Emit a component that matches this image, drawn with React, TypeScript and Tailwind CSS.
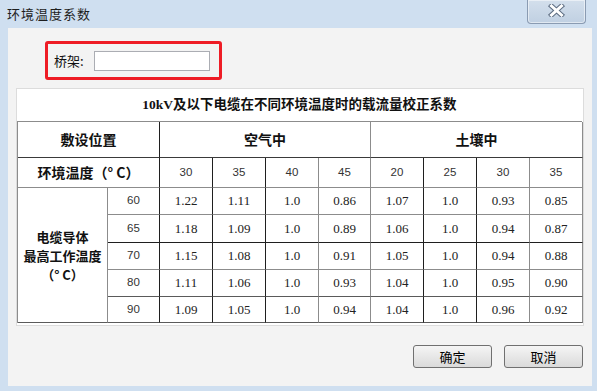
import React from "react";

const cjk = "font-['Noto_Sans_CJK_SC',sans-serif]";
const serif = "font-['Liberation_Serif','Noto_Sans_CJK_SC',serif]";

// line colour of each vertical boundary (right edge of column i)
const colR = [
    "border-r-[#8c8c8c]",
    "border-r-[#1f1f1f]",
    "border-r-[#1f1f1f]",
    "border-r-[#1f1f1f]",
    "border-r-[#8c8c8c]",
    "border-r-[#8c8c8c]",
    "border-r-[#1f1f1f]",
    "border-r-[#1f1f1f]",
    "border-r-[#8c8c8c]",
    "border-r-[#8c8c8c]",
];

// line colour of each horizontal boundary (bottom edge of row i)
const rowB = [
    "border-b-[#3a3a3a]",
    "border-b-[#8c8c8c]",
    "border-b-[#8c8c8c]",
    "border-b-[#1f1f1f]",
    "border-b-[#8c8c8c]",
    "border-b-[#5a5a5a]",
    "border-b-[#5a5a5a]",
];

const airTemps = ["30", "35", "40", "45"];
const soilTemps = ["20", "25", "30", "35"];

const rows: { t: string; v: string[] }[] = [
    { t: "60", v: ["1.22", "1.11", "1.0", "0.86", "1.07", "1.0", "0.93", "0.85"] },
    { t: "65", v: ["1.18", "1.09", "1.0", "0.89", "1.06", "1.0", "0.94", "0.87"] },
    { t: "70", v: ["1.15", "1.08", "1.0", "0.91", "1.05", "1.0", "0.94", "0.88"] },
    { t: "80", v: ["1.11", "1.06", "1.0", "0.93", "1.04", "1.0", "0.95", "0.90"] },
    { t: "90", v: ["1.09", "1.05", "1.0", "0.94", "1.04", "1.0", "0.96", "0.92"] },
];

function Cell({ c, r, className = "", children }: { c: number; r: number; className?: string; children?: React.ReactNode }) {
    return (
        <div className={`flex items-center justify-center border-r border-b ${colR[c]} ${rowB[r]} ${className}`}>
            {children}
        </div>
    );
}

function CloseX() {
    return (
        <svg width="17" height="13" viewBox="0 0 17 13">
            <path d="M3.5 2 L13.5 11 M13.5 2 L3.5 11" stroke="#5d6d82" strokeWidth="5" strokeLinecap="square" />
            <path d="M3.5 2 L13.5 11 M13.5 2 L3.5 11" stroke="#ffffff" strokeWidth="3" strokeLinecap="square" />
        </svg>
    );
}

function DialogButton({ label }: { label: string }) {
    return (
        <button className={`w-[79px] h-[23px] rounded-[3px] border border-[#707070] bg-gradient-to-b from-[#f5f5f5] to-[#dadada] text-[13px] text-black leading-none ${cjk}`}>
            {label}
        </button>
    );
}

export default function App() {
    return (
        <div className="w-[597px] h-[391px] overflow-hidden bg-[#cfdff0] flex flex-col">
            {/* Title bar */}
            <div className="h-[28px] flex items-start shrink-0">
                <span className={`pl-[7px] pt-[5px] leading-[18px] text-[13px] tracking-[1px] text-[#1e1e1e] ${cjk}`}>环境温度系数</span>
                <div className="ml-auto mr-[11px] w-[59px] h-[24px] rounded-b-[4px] border border-t-0 border-[#8a9bb2] bg-gradient-to-b from-[#d3dfec] to-[#c0d0e2] flex items-center justify-center pb-[3px] shadow-[inset_0_0_0_1px_rgba(255,255,255,0.5)]">
                    <CloseX />
                </div>
            </div>

            {/* Content */}
            <div className="flex-1 ml-[8px] mr-[5px] mb-[5px] bg-[#f3f3f3] flex flex-col px-2">
                <div className="self-start ml-[29px] mt-[13px] w-[177px] h-[39px] border-[3px] border-[#ee1c25] rounded-[3px] flex items-center pl-[6px]">
                    <span className={`text-[13px] text-[#111] ${cjk}`}>桥架:</span>
                    <div className="ml-[10px] w-[116px] h-[20px] bg-white border border-[#abadb3]" />
                </div>

                {/* Table panel */}
                <div className="mt-[8px] bg-white border border-[#dcdcdc] pr-px pb-[2px]">
                    <div className={`h-[32px] flex items-center justify-center text-[13.5px] font-bold text-[#111] ${serif}`}>
                        10kV及以下电缆在不同环境温度时的载流量校正系数
                    </div>
                    <div className="grid grid-cols-[90px_52px_53px_53px_53px_52px_53px_53px_53px_53px] grid-rows-[36px_30px_27px_28px_27px_27px_26px] border-l border-t border-l-[#8c8c8c] border-t-[#8c8c8c]">
                        <Cell c={1} r={0} className={`col-span-2 text-[14px] font-bold text-[#111] ${cjk}`}>敷设位置</Cell>
                        <Cell c={5} r={0} className={`col-span-4 text-[14px] font-bold text-[#111] ${cjk}`}>空气中</Cell>
                        <Cell c={9} r={0} className={`col-span-4 text-[14px] font-bold text-[#111] ${cjk}`}>土壤中</Cell>

                        <Cell c={1} r={1} className={`col-span-2 text-[14px] font-bold text-[#111] ${cjk}`}>环境温度（° C）</Cell>
                        {[...airTemps, ...soilTemps].map((t, i) => (
                            <Cell key={i} c={i + 2} r={1} className="text-[11.5px] text-[#333] font-['Liberation_Sans',sans-serif]">{t}</Cell>
                        ))}

                        <Cell c={0} r={6} className={`row-span-5 flex-col text-[13px] font-bold text-[#111] ${cjk}`}>
                            <span className="block h-[19px] leading-[19px]">电缆导体</span>
                            <span className="block h-[19px] leading-[19px]">最高工作温度</span>
                            <span className="block h-[19px] leading-[19px]">（° C）</span>
                        </Cell>
                        {rows.map((row, ri) => (
                            <React.Fragment key={row.t}>
                                <Cell c={1} r={ri + 2} className="text-[11.5px] text-[#333] font-['Liberation_Sans',sans-serif]">{row.t}</Cell>
                                {row.v.map((v, vi) => (
                                    <Cell key={vi} c={vi + 2} r={ri + 2} className="text-[13px] text-[#222] font-['Liberation_Serif',serif]">{v}</Cell>
                                ))}
                            </React.Fragment>
                        ))}
                    </div>
                </div>

                {/* Buttons */}
                <div className="mt-[19px] flex justify-end gap-[12px] mr-px">
                    <DialogButton label="确定" />
                    <DialogButton label="取消" />
                </div>
            </div>
        </div>
    );
}
